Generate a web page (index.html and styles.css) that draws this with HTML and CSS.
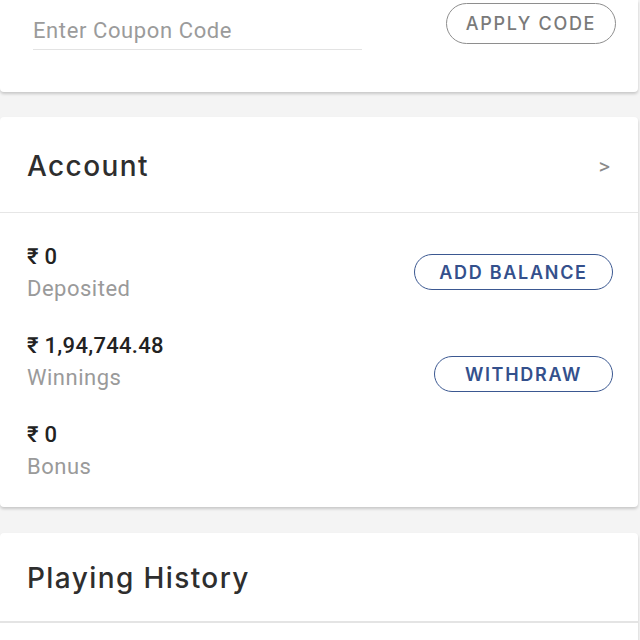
FILE: index.html
```html
<!DOCTYPE html>
<html>
<head>
<meta charset="utf-8">
<link rel="stylesheet" href="styles.css">
</head>
<body>
<div class="card coupon">
  <div class="coupon-input">Enter Coupon Code</div>
  <button class="apply-btn">APPLY CODE</button>
</div>

<div class="card account">
  <div class="section-head">
    <span class="section-title">Account</span>
    <span class="chev">&gt;</span>
  </div>
  <div class="balances">
    <div class="bal-row">
      <div class="bal-info">
        <div class="amount">₹ 0</div>
        <div class="label">Deposited</div>
      </div>
      <button class="blue-btn add">ADD BALANCE</button>
    </div>
    <div class="bal-row">
      <div class="bal-info">
        <div class="amount">₹ 1,94,744.48</div>
        <div class="label">Winnings</div>
      </div>
      <button class="blue-btn withdraw">WITHDRAW</button>
    </div>
    <div class="bal-row">
      <div class="bal-info">
        <div class="amount">₹ 0</div>
        <div class="label">Bonus</div>
      </div>
    </div>
  </div>
</div>

<div class="card history">
  <div class="section-head hist-head">
    <span class="section-title">Playing History</span>
  </div>
  <div class="next-item"></div>
</div>
</body>
</html>
```

FILE: styles.css
```css
html, body {
  margin: 0;
  padding: 0;
  background: #f4f4f4;
  width: 640px;
  height: 640px;
  overflow: hidden;
}

body {
  font-family: Roboto, "Noto Sans", sans-serif;
}

.card {
  background: #fff;
  margin: 0 2px 0 0;
  box-shadow: 0 2px 3px rgba(0, 0, 0, 0.18);
}

.coupon {
  height: 92px;
  display: flex;
  align-items: flex-start;
  justify-content: space-between;
  padding: 0 22px 0 33px;
  box-sizing: border-box;
  border-radius: 0 0 4px 4px;
}

.coupon-input {
  width: 329px;
  margin-top: 16px;
  height: 34px;
  line-height: 30px;
  font-size: 22px;
  letter-spacing: 0.6px;
  color: #9b9b9b;
  border-bottom: 1px solid #e3e3e3;
  box-sizing: border-box;
}

.apply-btn {
  margin-top: 3px;
  width: 170px;
  height: 41px;
  border: 1.5px solid #8e8e8e;
  border-radius: 21px;
  background: #fff;
  color: #7a7a7a;
  font-family: Inter, "Open Sans", sans-serif;
  font-size: 18px;
  font-weight: 500;
  letter-spacing: 1.7px;
  padding: 0;
}

.account {
  margin-top: 25px;
  border-radius: 4px;
}

.section-head {
  height: 96px;
  display: flex;
  align-items: center;
  justify-content: space-between;
  padding: 0 27px 0 27px;
  border-bottom: 1px solid #e6e6e6;
  box-sizing: border-box;
}

.section-title {
  font-family: Inter, "Open Sans", sans-serif;
  font-size: 28px;
  font-weight: 500;
  letter-spacing: 1.4px;
  color: #2e2e2e;
  margin-top: 2px;
}

.chev {
  font-family: Roboto, sans-serif;
  font-size: 22px;
  color: #8a8a8a;
  margin-right: 1px;
  margin-top: 4px;
}

.balances {
  padding: 28px 25px 24px 27px;
  display: flex;
  flex-direction: column;
  gap: 25px;
}

.bal-row {
  display: flex;
  justify-content: space-between;
  align-items: flex-start;
}

.amount {
  font-size: 22px;
  font-weight: 500;
  letter-spacing: 0.3px;
  color: #222;
  line-height: 32px;
}

.label {
  font-size: 22px;
  letter-spacing: 0.5px;
  color: #9a9a9a;
  line-height: 32px;
}

.blue-btn {
  height: 36px;
  border: 1.5px solid #3b5891;
  border-radius: 18px;
  background: #fff;
  color: #34508c;
  font-family: Inter, "Open Sans", sans-serif;
  font-size: 18px;
  font-weight: 600;
  letter-spacing: 1.7px;
  padding: 0;
}

.add {
  width: 199px;
  margin-top: 13px;
}

.withdraw {
  width: 179px;
  margin-top: 26px;
}

.history {
  margin-top: 26px;
  border-radius: 4px 4px 0 0;
}

.hist-head {
  height: 90px;
  border-bottom: 2px solid #e4e4e4;
}

.next-item {
  height: 40px;
  background: #fff;
}
```
